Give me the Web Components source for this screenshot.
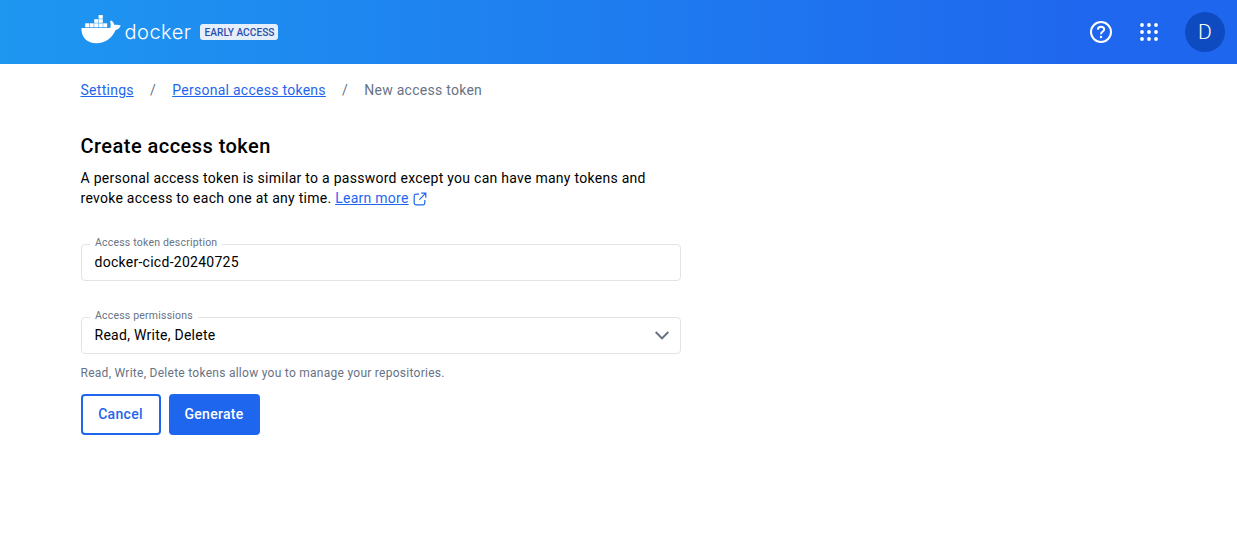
<!DOCTYPE html>
<html lang="en">
<head>
<meta charset="utf-8">
<title>New access token</title>
<style>
  html, body { margin: 0; background: #fff; }
  body { font-family: Roboto, "Liberation Sans", sans-serif; }
</style>
</head>
<body>
<app-header></app-header>
<main-page>
  <bread-crumbs></bread-crumbs>
  <token-form></token-form>
</main-page>

<script>
class AppHeader extends HTMLElement {
  constructor() {
    super();
    this.attachShadow({ mode: 'open' }).innerHTML = `
      <style>
        :host {
          display: flex;
          align-items: center;
          height: 64px;
          padding: 0 12px 0 80.5px;
          background: linear-gradient(90deg, #1e97f1 0%, #1f67ee 88%, #1e66ee 100%);
          color: #fff;
        }
        .whale { display: block; align-self: flex-start; margin: 15px 3px 0 0; }
        .word {
          font-family: Inter, sans-serif;
          font-weight: 300;
          font-size: 20px;
          letter-spacing: 0.5px;
          line-height: 24px;
          margin-top: -1px;
        }
        .badge {
          margin-left: 9px;
          height: 16px;
          width: 78px;
          display: flex;
          align-items: center;
          justify-content: center;
          background: #e5eefb;
          border-radius: 3px;
          color: #2a4fae;
          font-size: 10.2px;
          font-weight: 500;
        }
        .spacer { flex: 1; }
        .icons { display: flex; align-items: center; }
        .help { margin-right: 27px; display: block; }
        .apps { margin-right: 27px; display: block; }
        .avatar {
          width: 40px;
          height: 40px;
          border-radius: 50%;
          background: #0e4bc0;
          display: flex;
          align-items: center;
          justify-content: center;
          font-size: 21px;
          font-weight: 300;
        }
      </style>
      <svg class="whale" width="41" height="29" viewBox="0 0 41 29" fill="#fff">
        <rect x="17.6" y="0" width="4.2" height="3.7"/>
        <rect x="13.2" y="4.2" width="4" height="3.6"/><rect x="17.6" y="4.2" width="4.2" height="3.6"/>
        <rect x="4.2" y="8.3" width="4" height="4"/><rect x="8.7" y="8.3" width="4" height="4"/><rect x="13.2" y="8.3" width="4" height="4"/><rect x="17.6" y="8.3" width="4.2" height="4"/><rect x="22.2" y="8.3" width="4" height="4"/>
        <path d="M0.5 13H29.2C29.9 11 29.8 8.4 29 6.2L30.4 5.6C32 6.8 33 8.4 33.4 10C35.4 9.4 37.6 9.6 39.8 10.6C38.6 13.4 36.6 14.8 34.6 15C31.4 22.8 24.8 28.2 15.2 28.2C5.6 28.2 0.2 22 0.5 13Z"/>
      </svg>
      <span class="word">docker</span>
      <span class="badge">EARLY ACCESS</span>
      <span class="spacer"></span>
      <div class="icons">
        <svg class="help" width="24" height="24" viewBox="0 0 24 24" fill="none" stroke="#fff">
          <circle cx="12" cy="12" r="10" stroke-width="2"/>
          <path d="M8.9 9.6C9 7.8 10.3 6.8 12 6.8C13.8 6.8 15.1 7.9 15.1 9.4C15.1 11.6 12 11.6 12 14.2" stroke-width="2"/>
          <circle cx="12" cy="17" r="1.2" fill="#fff" stroke="none"/>
        </svg>
        <svg class="apps" width="18" height="18" viewBox="0 0 18 18" fill="#fff">
          <circle cx="2" cy="2" r="1.9"/><circle cx="9" cy="2" r="1.9"/><circle cx="16" cy="2" r="1.9"/>
          <circle cx="2" cy="9" r="1.9"/><circle cx="9" cy="9" r="1.9"/><circle cx="16" cy="9" r="1.9"/>
          <circle cx="2" cy="16" r="1.9"/><circle cx="9" cy="16" r="1.9"/><circle cx="16" cy="16" r="1.9"/>
        </svg>
        <div class="avatar">D</div>
      </div>
    `;
  }
}

class MainPage extends HTMLElement {
  constructor() {
    super();
    this.attachShadow({ mode: 'open' }).innerHTML = `
      <style>
        :host {
          display: block;
          padding: 16px 80.5px 0;
          color: #000;
        }
      </style>
      <slot></slot>
    `;
  }
}

class BreadCrumbs extends HTMLElement {
  constructor() {
    super();
    this.attachShadow({ mode: 'open' }).innerHTML = `
      <style>
        :host {
          display: flex;
          font-size: 14px;
          line-height: 20px;
          letter-spacing: 0.27px;
          color: #677285;
        }
        a { color: #1f66ee; text-decoration: underline; }
        .sep { width: 38.4px; text-align: center; }
      </style>
      <a href="#">Settings</a>
      <span class="sep">/</span>
      <a href="#">Personal access tokens</a>
      <span class="sep">/</span>
      <span>New access token</span>
    `;
  }
}

class FormField extends HTMLElement {
  constructor() {
    super();
    const select = this.hasAttribute('select');
    this.attachShadow({ mode: 'open' }).innerHTML = `
      <style>
        :host {
          display: block;
          position: relative;
          width: 600.5px;
          box-sizing: border-box;
          height: 37px;
          border: 1px solid #e1e3e8;
          border-radius: 4px;
          font-size: 14px;
          letter-spacing: 0.27px;
          color: #000;
        }
        .label {
          position: absolute;
          left: 8.5px;
          top: -8px;
          padding: 0 5px;
          background: #fff;
          font-size: 10.5px;
          line-height: 12px;
          letter-spacing: 0.2px;
          color: #677285;
        }
        .row {
          display: flex;
          align-items: center;
          justify-content: space-between;
          box-sizing: border-box;
          height: 100%;
          padding: 0 11px 2px 13px;
        }
        svg { display: block; margin-top: 2px; }
      </style>
      <span class="label">${this.getAttribute('label')}</span>
      <div class="row">
        <slot></slot>
        ${select ? `<svg width="14" height="9" viewBox="0 0 14 9" fill="none" stroke="#677285" stroke-width="2"><path d="M0.7 1L7 7.4L13.3 1"/></svg>` : ''}
      </div>
    `;
  }
}

class DockerButton extends HTMLElement {
  constructor() {
    super();
    this.attachShadow({ mode: 'open' }).innerHTML = `
      <style>
        :host {
          display: flex;
          align-items: center;
          justify-content: center;
          box-sizing: border-box;
          height: 41px;
          padding: 0 16px 2px;
          border: 2px solid #1f66ee;
          border-radius: 4px;
          background: #fff;
          color: #1f66ee;
          font-size: 14px;
          font-weight: 500;
          letter-spacing: 0.3px;
        }
        :host([primary]) { background: #1f66ee; color: #fff; }
      </style>
      <slot></slot>
    `;
  }
}

class TokenForm extends HTMLElement {
  constructor() {
    super();
    this.attachShadow({ mode: 'open' }).innerHTML = `
      <style>
        :host { display: block; }
        h1 {
          margin: 32px 0 0;
          font-size: 20px;
          line-height: 28px;
          font-weight: 500;
          letter-spacing: 0.46px;
        }
        p {
          margin: 8px 0 0;
          width: 600px;
          font-size: 14px;
          line-height: 20px;
          letter-spacing: 0.27px;
        }
        a { color: #1f66ee; }
        p svg { vertical-align: -3px; margin-left: 1px; }
        form-field { margin-top: 36px; }
        .hint {
          margin-top: 10px;
          font-size: 12px;
          line-height: 18px;
          letter-spacing: 0.27px;
          color: #677285;
        }
        .actions { display: flex; gap: 8px; margin-top: 12px; }
        .cancel { width: 80px; }
        .generate { width: 91px; }
      </style>
      <h1>Create access token</h1>
      <p>A personal access token is similar to a password except you can have many tokens and<br>revoke access to each one at any time. <a href="#">Learn more</a>
        <svg width="14" height="14" viewBox="0 0 14 14" fill="none" stroke="#1f66ee" stroke-width="1.2"><path d="M6 2.2H3C1.9 2.2 1.2 2.9 1.2 4V11C1.2 12.1 1.9 12.8 3 12.8H10C11.1 12.8 11.8 12.1 11.8 11V8"/><path d="M8.2 1.2H12.8V5.8M12.8 1.2L6.4 7.6"/></svg>
      </p>
      <form-field label="Access token description">docker-cicd-20240725</form-field>
      <form-field label="Access permissions" select>Read, Write, Delete</form-field>
      <div class="hint">Read, Write, Delete tokens allow you to manage your repositories.</div>
      <div class="actions">
        <docker-button class="cancel">Cancel</docker-button>
        <docker-button class="generate" primary>Generate</docker-button>
      </div>
    `;
  }
}

customElements.define('app-header', AppHeader);
customElements.define('main-page', MainPage);
customElements.define('bread-crumbs', BreadCrumbs);
customElements.define('form-field', FormField);
customElements.define('docker-button', DockerButton);
customElements.define('token-form', TokenForm);
</script>
</body>
</html>
